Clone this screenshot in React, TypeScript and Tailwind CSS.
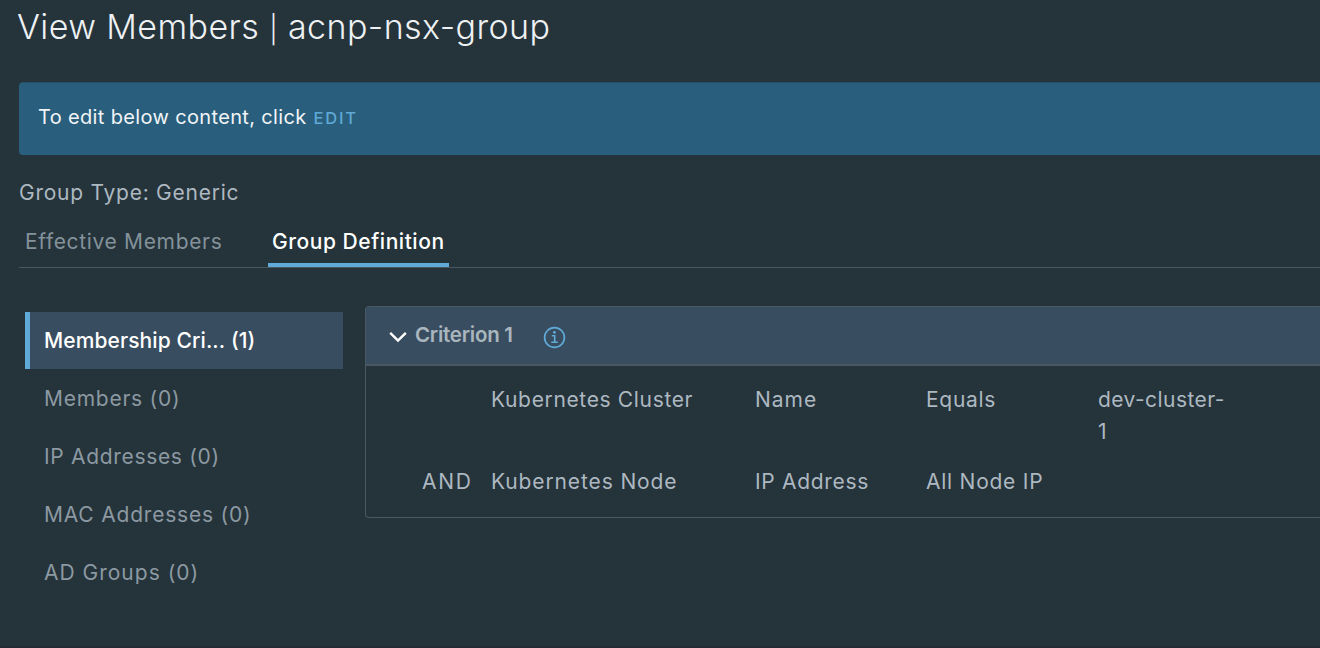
const members = [
  { label: "Members (0)", tracking: "tracking-[0.75px]" },
  { label: "IP Addresses (0)", tracking: "tracking-[0.68px]" },
  { label: "MAC Addresses (0)", tracking: "tracking-[0.8px]" },
  { label: "AD Groups (0)", tracking: "tracking-[1px]" },
];

function Banner() {
  return (
    <div className="mt-[35px] ml-[19px] flex h-[73px] items-start rounded-l-[4px] border-t border-[#24506a] bg-[#295f7d] pt-[18px] pl-[19px] leading-8">
      <span className="text-[20px] font-[430] tracking-[0.35px] text-[#f1f4f6]">To edit below content, click</span>
      <a className="ml-[7px] pt-px text-[16.5px] font-medium tracking-[1.8px] text-[#5fa9d6]">EDIT</a>
    </div>
  );
}

function Tabs() {
  return (
    <div className="ml-[19px] flex h-[52px] items-stretch border-b border-[#485761] leading-[52px]">
      <div className="w-[249px] pl-[6px] tracking-[0.66px] text-[#84929b]">Effective Members</div>
      <div className="flex w-[181px] flex-col">
        <span className="h-[47px] pl-1 font-[450] tracking-[0.55px] text-white">Group Definition</span>
        <span className="h-1 bg-[#60aad8]" />
      </div>
    </div>
  );
}

function Sidebar() {
  return (
    <nav className="mt-[6px] flex w-[318px] flex-col gap-px leading-[58px] text-[#8c99a2]">
      <div className="flex h-[57px] border-l-[5px] border-[#60aad8] bg-[#394d60] pl-[14px] font-[450] text-white">
        <span className="w-[187px] tracking-[0.1px]">Membership Cri...</span>
        <span>(1)</span>
      </div>
      {members.map((m) => (
        <div key={m.label} className={`h-[57px] pl-[19px] ${m.tracking}`}>
          {m.label}
        </div>
      ))}
    </nav>
  );
}

function Criterion() {
  return (
    <section className="ml-[22px] h-[212px] flex-1 rounded-l-[4px] border border-r-0 border-[#4a5863]">
      <header className="flex h-[59px] items-start rounded-tl-[3px] border-b-2 border-[#4a5863] bg-[#394d60] pt-3 pl-[23px]">
        <svg className="mt-[12px] h-3 w-[18px]" viewBox="0 0 18 12" fill="none" stroke="#fff" strokeWidth="2.4">
          <path d="M1.2 1.8 9 9.6l7.8-7.8" />
        </svg>
        <span className="ml-[8px] w-[128px] text-[20.5px] leading-8 font-semibold tracking-[-0.25px] text-[#a9b6be]">
          Criterion 1
        </span>
        <svg className="mt-[7px] size-[23px]" viewBox="0 0 23 23" fill="none" stroke="#60aad8">
          <circle cx="11.5" cy="11.5" r="9.9" strokeWidth="1.7" />
          <path d="M8.8 9.8h2.9v6.4M8.3 16.3h6.4" strokeWidth="1.6" />
          <circle cx="11.4" cy="6.4" r="1.4" fill="#60aad8" stroke="none" />
        </svg>
      </header>
      <div className="grid grid-cols-[125px_264px_171px_172px_135px] gap-y-[18px] pt-[18px] leading-8 text-[#adb8c1]">
        <span />
        <span className="tracking-[0.65px]">Kubernetes Cluster</span>
        <span className="tracking-[1px]">Name</span>
        <span className="tracking-[0.7px]">Equals</span>
        <span className="tracking-[0.45px]">
          dev-cluster-
          <br />1
        </span>
        <span className="pl-[56px] tracking-[1.7px]">AND</span>
        <span className="tracking-[0.88px]">Kubernetes Node</span>
        <span className="tracking-[0.7px]">IP Address</span>
        <span className="tracking-[0.75px]">All Node IP</span>
      </div>
    </section>
  );
}

export default function App() {
  return (
    <main className="flex h-[648px] w-[1320px] flex-col overflow-hidden border-b-2 border-[#252b33] bg-[#25333a] font-['Inter',sans-serif] text-[21px]">
      <h1 className="mt-[7px] ml-[17px] h-10 text-[34px] leading-10 font-[350] tracking-[0.42px] text-[#eef1f3]">
        View Members <span className="text-[27px]">|</span> acnp-nsx-group
      </h1>
      <Banner />
      <p className="mt-[22px] ml-[19px] h-8 leading-8 tracking-[0.75px] text-[#adb8c1]">Group Type: Generic</p>
      <div className="mt-[7px]">
        <Tabs />
      </div>
      <div className="mt-[38px] ml-[25px] flex">
        <Sidebar />
        <Criterion />
      </div>
    </main>
  );
}
